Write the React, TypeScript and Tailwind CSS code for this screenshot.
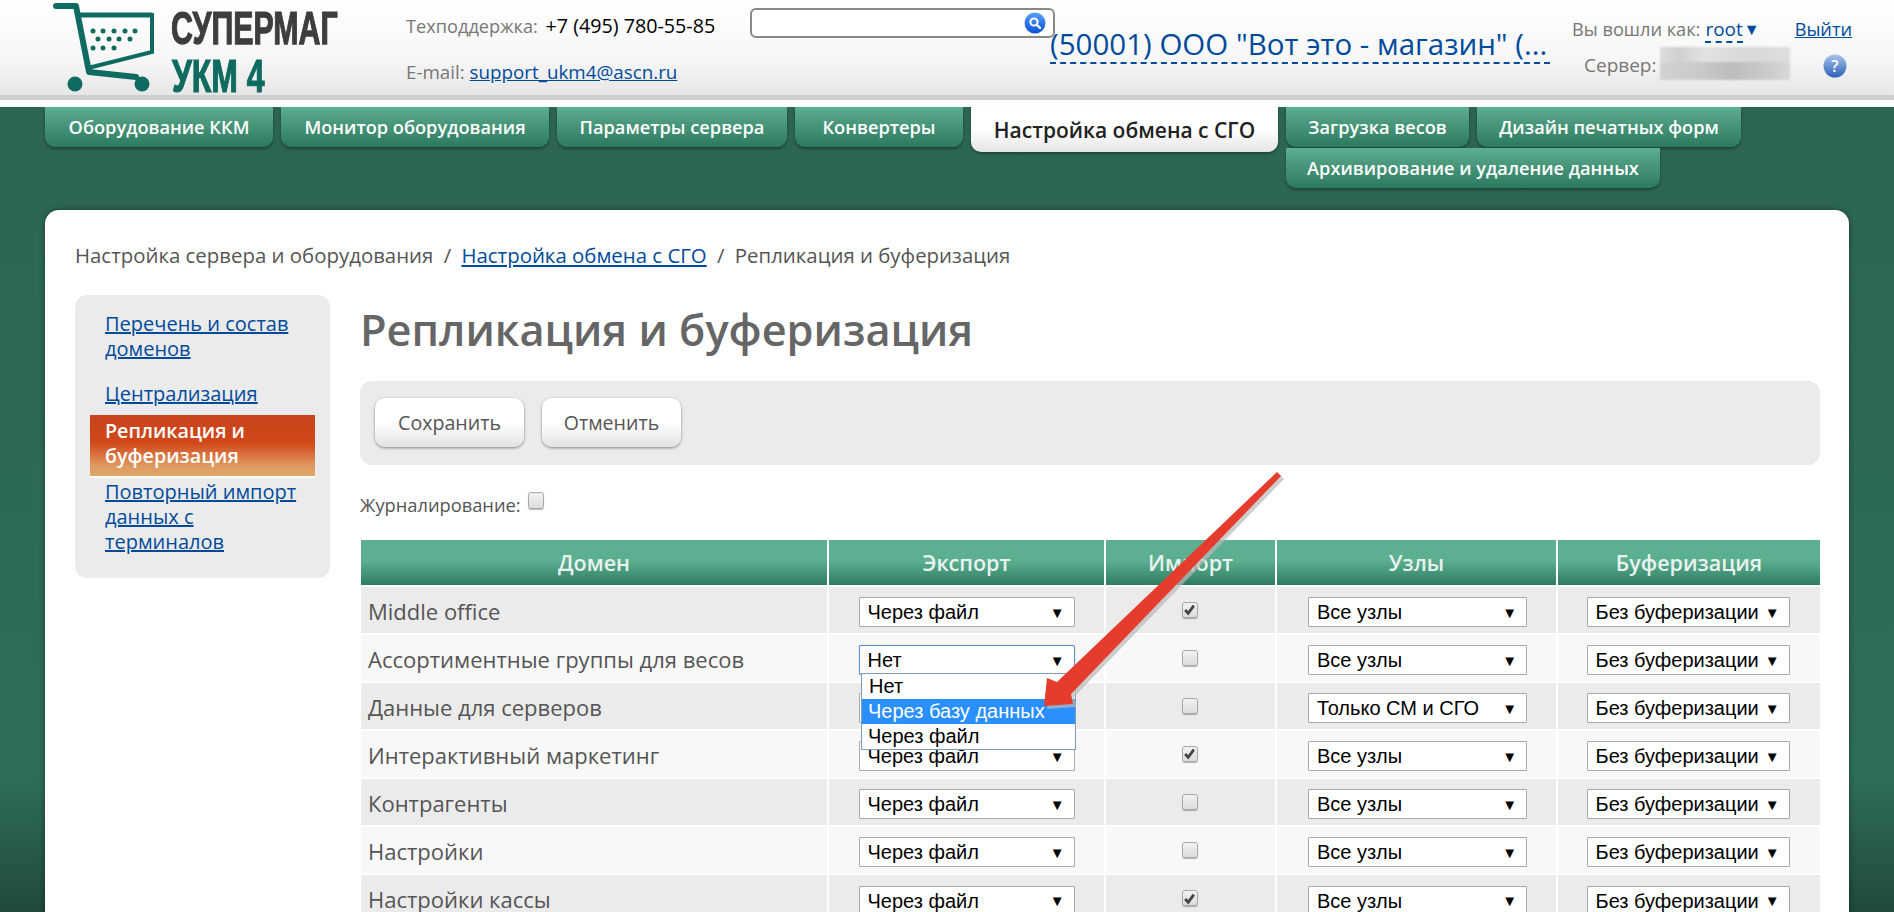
import React from 'react';

const tabClass = "flex items-center justify-center rounded-b-[10px] h-[40px] pt-[1px] bg-[linear-gradient(#5caf91_0%,#4f9d81_30%,#2b7a5f_100%)] text-white text-[18.2px] font-semibold shadow-[0_2px_3px_rgba(0,0,0,0.35)]";

const Tab = ({ label, width }: { label: string; width: string }) => (
    <div className={`${tabClass} ${width}`}>{label}</div>
);

const Logo = () => (
    <div className="relative w-[290px] h-[95px] shrink-0 ml-[50px]">
        <svg width="112" height="95" viewBox="0 0 112 95" className="absolute left-0 top-0" fill="none" stroke="#0f6b60">
            <path d="M6 6H26L39 72L86 77" strokeWidth="6" strokeLinecap="round" strokeLinejoin="round" />
            <path d="M30 15H102V52L38 68" strokeWidth="4" />
            <path d="M30 15H102" strokeWidth="5" />
            <g fill="#0f6b60" stroke="none">
                {[43, 53, 64, 75, 85].map((x) => <circle key={x} cx={x} cy="31" r="2.5" />)}
                {[48, 59, 69, 80].map((x) => <circle key={x} cx={x} cy="39" r="2.5" />)}
                {[43, 53, 64].map((x) => <circle key={x} cx={x} cy="48" r="2.5" />)}
                <circle cx="25" cy="84" r="7.5" />
                <circle cx="92" cy="84" r="7.5" />
            </g>
        </svg>
        <div className="absolute left-[121px] top-[4px] origin-left scale-x-[0.82] scale-y-[1.25] font-['Liberation_Sans',sans-serif] text-[37px] font-bold leading-[50px] text-[#3d3d3d] whitespace-nowrap [-webkit-text-stroke:1px_#3d3d3d]">СУПЕРМАГ</div>
        <div className="absolute left-[122px] top-[54px] origin-left scale-x-[0.84] scale-y-[1.2] font-['Liberation_Sans',sans-serif] text-[38px] font-bold leading-[44px] text-[#0f6b60] whitespace-nowrap [-webkit-text-stroke:1px_#0f6b60]">УКМ 4</div>
    </div>
);

const SearchIcon = () => (
    <svg width="22" height="22" viewBox="0 0 22 22">
        <defs>
            <linearGradient id="sg" x1="0" y1="0" x2="0" y2="1">
                <stop offset="0" stopColor="#5aa0f5" />
                <stop offset="1" stopColor="#0a50d8" />
            </linearGradient>
        </defs>
        <circle cx="11" cy="11" r="10.5" fill="url(#sg)" />
        <circle cx="10" cy="10" r="3.6" fill="none" stroke="#fff" strokeWidth="2" />
        <path d="M12.8 12.8L16 16" stroke="#fff" strokeWidth="2.4" strokeLinecap="round" />
    </svg>
);

const HelpIcon = () => (
    <svg width="24" height="26" viewBox="0 0 24 26">
        <defs>
            <linearGradient id="hg" x1="0" y1="0" x2="0" y2="1">
                <stop offset="0" stopColor="#a8c4ea" />
                <stop offset="1" stopColor="#2c62b8" />
            </linearGradient>
        </defs>
        <circle cx="12" cy="13" r="11.5" fill="url(#hg)" />
        <text x="12" y="19" textAnchor="middle" fontSize="16" fontFamily="Open Sans, sans-serif" fontWeight="600" fill="#fff">?</text>
    </svg>
);

const Header = () => (
    <div className="h-[107px] bg-white">
        <div className="flex h-[95px] bg-[linear-gradient(#ffffff_0%,#f6f6f6_65%,#e6e6e6_100%)] text-[18.2px] text-[#777]">
            <Logo />
            <div className="w-[344px] shrink-0 ml-[66px] pt-[11px]">
                <div className="h-[47px] whitespace-nowrap">Техподдержка: <span className="text-black ml-[3px] text-[19.7px]">+7 (495) 780-55-85</span></div>
                <div className="text-[18.8px] whitespace-nowrap">E-mail: <a className="text-[#004a9c] underline">support_ukm4@ascn.ru</a></div>
            </div>
            <div className="w-[305px] h-[30px] mt-[8px] shrink-0 border-2 border-[#888] rounded-[6px] bg-white flex items-center justify-end pr-[7px]">
                <SearchIcon />
            </div>
            <div className="w-[500px] shrink-0 -ml-[5px] mt-[26px] h-[38px] whitespace-nowrap text-[29.5px] leading-[36px] text-[#004a9c] border-b-2 border-dashed border-[#004a9c]">
                (50001) ООО "Вот это - магазин" (...
            </div>
            <div className="ml-[22px] pt-[16px] w-[300px]">
                <div className="flex h-[36px] leading-[26px] whitespace-nowrap">
                    <span>Вы вошли как:</span>
                    <span className="ml-[5px] h-[27px] text-[19px] text-[#004a9c] border-b-2 border-dashed border-[#004a9c]">root</span>
                    <span className="text-[#004a9c] text-[16px] leading-[26px] ml-[1px]">▼</span>
                    <a className="ml-[35px] text-[#004a9c] underline">Выйти</a>
                </div>
                <div className="flex items-start">
                    <span className="ml-[12px] leading-[26px] text-[19px]">Сервер:</span>
                    <div className="ml-[4px] -mt-[5px] w-[130px] h-[33px] blur-[1px] flex flex-col">
                        <div className="h-[15px] bg-[linear-gradient(90deg,#dcdcdc,#d0d0d0_15%,#e2e2e2_35%,#d8d8d8_70%,#dedede)]" />
                        <div className="h-[18px] bg-[linear-gradient(90deg,#d2d2d2,#cacaca_30%,#bdbdbd_55%,#cccccc_85%,#d8d8d8)]" />
                    </div>
                    <div className="ml-[33px] mt-[1px]"><HelpIcon /></div>
                </div>
            </div>
        </div>
        <div className="h-[5px] bg-[#cfcfcf]" />
    </div>
);

const TabsBar = () => (
    <div className="flex items-start gap-[8px] pl-[45px] h-[103px]">
        <Tab label="Оборудование ККМ" width="w-[228px]" />
        <Tab label="Монитор оборудования" width="w-[268px]" />
        <Tab label="Параметры сервера" width="w-[230px]" />
        <Tab label="Конвертеры" width="w-[168px]" />
        <div className="w-[307px] h-[45px] pt-[2px] rounded-b-[10px] bg-[linear-gradient(#ffffff_0%,#ffffff_50%,#e4e4e4_100%)] text-[#222] text-[21px] font-semibold flex items-center justify-center shadow-[0_2px_3px_rgba(0,0,0,0.3)]">
            Настройка обмена с СГО
        </div>
        <div className="flex flex-col gap-[1px]">
            <div className="flex gap-[8px]">
                <Tab label="Загрузка весов" width="w-[183px]" />
                <Tab label="Дизайн печатных форм" width="w-[264px]" />
            </div>
            <Tab label="Архивирование и удаление данных" width="w-[374px]" />
        </div>
    </div>
);

const Sidebar = () => (
    <div className="w-[255px] h-[283px] shrink-0 rounded-[12px] bg-[#ebebeb] px-[15px] pt-[16px] text-[20px] leading-[25px]">
        <a className="block px-[15px] text-[#004a9c] underline">Перечень и состав доменов</a>
        <a className="block px-[15px] mt-[20px] text-[#004a9c] underline">Централизация</a>
        <div className="mt-[9px] h-[63px] px-[15px] pt-[3px] text-[19.7px] font-semibold text-white border-b-2 border-white bg-[linear-gradient(#c9431b_0%,#d0471a_45%,#df9c62_85%,#e0a468_100%)]">Репликация и буферизация</div>
        <a className="block px-[15px] mt-[1px] text-[#004a9c] underline">Повторный импорт данных с терминалов</a>
    </div>
);

const Select = ({ value, focused, wide }: { value: string; focused?: boolean; wide: string }) => (
    <div className={`${wide} h-[30px] mx-auto flex items-center justify-between pl-[8px] pr-[9px] bg-white border font-['Liberation_Sans',sans-serif] text-[20px] text-black ${focused ? 'border-[#5b8ed6] rounded-[2px] shadow-[0_0_1px_#5b8ed6]' : 'border-[#a9a9a9] rounded-[1px]'}`}>
        <span>{value}</span>
        <span className="text-[15px] leading-none">▼</span>
    </div>
);

const Check = ({ checked }: { checked: boolean }) => (
    <div className="mx-auto w-[16px] h-[16px] -mt-[1px] rounded-[3px] border border-[#aaa] bg-[linear-gradient(#f2f2f2,#dcdcdc)] shadow-[0_1px_1px_rgba(0,0,0,0.3)] flex items-center justify-center">
        {checked && (
            <svg width="13" height="13" viewBox="0 0 12 12">
                <path d="M2 6.5L4.8 9.5L10 2.5" fill="none" stroke="#444" strokeWidth="2.6" />
            </svg>
        )}
    </div>
);

const rows = [
    { name: 'Middle office', exp: 'Через файл', imp: true, nodes: 'Все узлы' },
    { name: 'Ассортиментные группы для весов', exp: 'Нет', imp: false, nodes: 'Все узлы', open: true },
    { name: 'Данные для серверов', exp: 'Через файл', imp: false, nodes: 'Только СМ и СГО' },
    { name: 'Интерактивный маркетинг', exp: 'Через файл', imp: true, nodes: 'Все узлы' },
    { name: 'Контрагенты', exp: 'Через файл', imp: false, nodes: 'Все узлы' },
    { name: 'Настройки', exp: 'Через файл', imp: false, nodes: 'Все узлы' },
    { name: 'Настройки кассы', exp: 'Через файл', imp: true, nodes: 'Все узлы' },
];

const headCols = [
    { label: 'Домен', width: 'w-[467px]' },
    { label: 'Экспорт', width: 'w-[277px]' },
    { label: 'Импорт', width: 'w-[171px]' },
    { label: 'Узлы', width: 'w-[281px]' },
    { label: 'Буферизация', width: 'w-[263px]' },
];

const DomainTable = () => (
    <table className="table-fixed ml-[1px] w-[1459px] border-collapse text-[22px] text-[#555]">
        <thead>
            <tr className="h-[46px] bg-[linear-gradient(#5caf91_0%,#5caf91_45%,#2b7a5f_100%)]">
                {headCols.map((c) => (
                    <th key={c.label} className={`${c.width} p-0 pt-[2px] text-[21.5px] font-semibold text-[#e9f2ee] border-l-2 border-white first:border-l-0`}>{c.label}</th>
                ))}
            </tr>
        </thead>
        <tbody>
            {rows.map((r, i) => (
                <tr key={r.name} className={`h-[48px] border-t-2 border-white ${i % 2 === 0 ? 'bg-[#ebebeb]' : 'bg-[#f8f8f8]'}`}>
                    <td className="p-0 pl-[7px] pt-[2px]">{r.name}</td>
                    <td className="p-0 border-l-2 border-white">
                        <div className="relative pt-[4px]">
                            <Select value={r.exp} wide="w-[216px]" focused={r.open} />
                            {r.open && (
                                <div className="absolute z-10 left-[32px] top-[32px] w-[215px] h-[77px] bg-white border border-[#7f9db9] font-['Liberation_Sans',sans-serif] text-[20px] leading-[25px] text-black">
                                    <div className="pl-[7px]">Нет</div>
                                    <div className="pl-[6px] bg-[#2a8fff] text-white">Через базу данных</div>
                                    <div className="pl-[6px]">Через файл</div>
                                </div>
                            )}
                        </div>
                    </td>
                    <td className="p-0 pr-[2px] border-l-2 border-white"><Check checked={r.imp} /></td>
                    <td className="p-0 pl-[2px] border-l-2 border-white pt-[4px]"><Select value={r.nodes} wide="w-[219px]" /></td>
                    <td className="p-0 pr-[2px] border-l-2 border-white pt-[4px]"><Select value="Без буферизации" wide="w-[203px]" /></td>
                </tr>
            ))}
        </tbody>
    </table>
);

const RedArrow = () => (
    <svg className="absolute left-[1030px] top-[460px] z-20" width="265" height="260" viewBox="1030 460 265 260">
        <polygon points="1277,472 1281,476 1071,694 1073,704 1044,706 1047,678 1057,682" fill="#b9b9b9" transform="translate(3,3)" opacity="0.7" />
        <polygon points="1277,472 1281,476 1071,694 1073,704 1044,706 1047,678 1057,682" fill="#e53c2e" />
    </svg>
);

export default function App() {
    return (
        <div className="relative h-[912px] overflow-hidden bg-[linear-gradient(#2c6450_0%,#2e6e57_85%,#204a3a_100%)] font-['Open_Sans',sans-serif]">
            <Header />
            <TabsBar />
            <div className="mx-[45px] h-[800px] rounded-t-[14px] bg-white px-[30px] pt-[32px] shadow-[0_0_6px_rgba(0,0,0,0.4)]">
                <div className="h-[53px] text-[20.4px] leading-[26px] text-[#555] whitespace-nowrap">
                    Настройка сервера и оборудования <span className="mx-[5px]">/</span> <a className="text-[#004a9c] underline">Настройка обмена с СГО</a> <span className="mx-[5px]">/</span> Репликация и буферизация
                </div>
                <div className="flex gap-[30px]">
                    <Sidebar />
                    <div className="flex-1">
                        <h1 className="h-[86px] text-[43.3px] leading-[70px] font-semibold text-[#666] whitespace-nowrap">Репликация и буферизация</h1>
                        <div className="w-[1460px] h-[84px] rounded-[12px] bg-[#ebebeb] flex items-center gap-[18px] pl-[15px]">
                            <button className="w-[149px] h-[49px] -mt-[1px] rounded-[10px] bg-[linear-gradient(#ffffff_50%,#e2e2e2_100%)] text-[19.6px] text-[#555] shadow-[0_1px_3px_rgba(0,0,0,0.45)]">Сохранить</button>
                            <button className="w-[139px] h-[49px] -mt-[1px] rounded-[10px] bg-[linear-gradient(#ffffff_50%,#e2e2e2_100%)] text-[19.6px] text-[#555] shadow-[0_1px_3px_rgba(0,0,0,0.45)]">Отменить</button>
                        </div>
                        <div className="flex items-start h-[75px] pt-[28px] text-[18.3px] leading-[24px] text-[#555]">
                            <span>Журналирование:</span>
                            <div className="ml-[7px] -mt-[1px] w-[16px] h-[17px] rounded-[3px] border border-[#aaa] bg-[linear-gradient(#f2f2f2,#dcdcdc)] shadow-[0_1px_1px_rgba(0,0,0,0.3)]" />
                        </div>
                        <DomainTable />
                    </div>
                </div>
            </div>
            <RedArrow />
        </div>
    );
}
